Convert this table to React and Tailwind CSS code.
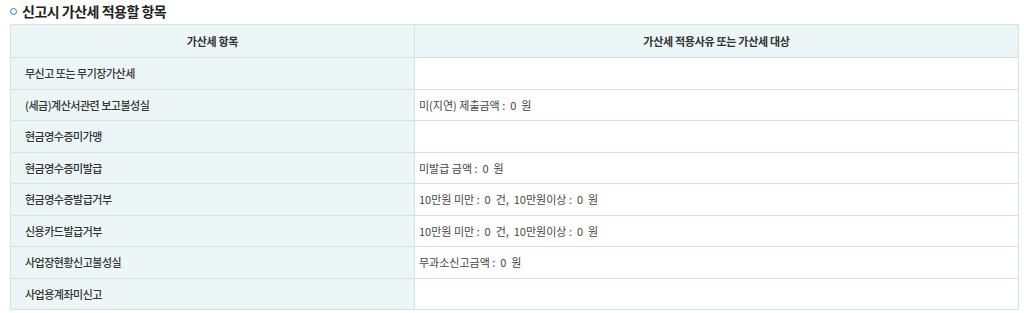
export default function App() {
  const rows = [
    ['무신고 또는 무기장가산세', ''],
    ['(세금)계산서관련 보고불성실', '미(지연) 제출금액 :  0  원'],
    ['현금영수증미가맹', ''],
    ['현금영수증미발급', '미발급 금액 :  0  원'],
    ['현금영수증발급거부', '10만원 미만 :  0  건,  10만원이상 :  0  원'],
    ['신용카드발급거부', '10만원 미만 :  0  건,  10만원이상 :  0  원'],
    ['사업장현황신고불성실', '무과소신고금액 :  0  원'],
    ['사업용계좌미신고', ''],
  ];

  return (
    <div className="w-[1024px] h-[313px] bg-white font-['Noto_Sans_CJK_KR',sans-serif] text-[#333]">
      <div className="flex items-center h-[22px] mb-[2px] pl-[10px]">
        <span className="w-[7px] h-[7px] rounded-full border-[1.5px] border-[#2a7bd6] mr-[5px]" />
        <h2 className="text-[14px] font-bold text-[#222] leading-none tracking-[-0.5px]">신고시 가산세 적용할 항목</h2>
      </div>
      <table className="ml-[10px] w-[1009px] border-collapse text-[11px]">
        <thead>
          <tr className="h-[33px]">
            <th className="w-[404px] border border-[#cfe4e8] bg-[#edf6f6] font-bold text-[#333] tracking-[-0.3px]">가산세 항목</th>
            <th className="border border-[#cfe4e8] bg-[#edf6f6] font-bold text-[#333] tracking-[-0.3px]">가산세 적용사유 또는 가산세 대상</th>
          </tr>
        </thead>
        <tbody>
          {rows.map(([label, value], i) => (
            <tr key={i} className="h-[31.5px]">
              <td className="border border-[#cfe4e8] bg-[#edf6f6] pl-[14px] font-medium text-[#333] whitespace-pre tracking-[-0.5px]">{label}</td>
              <td className="border border-[#cfe4e8] bg-white pl-[4px] text-[#444] whitespace-pre">{value}</td>
            </tr>
          ))}
        </tbody>
      </table>
    </div>
  );
}
